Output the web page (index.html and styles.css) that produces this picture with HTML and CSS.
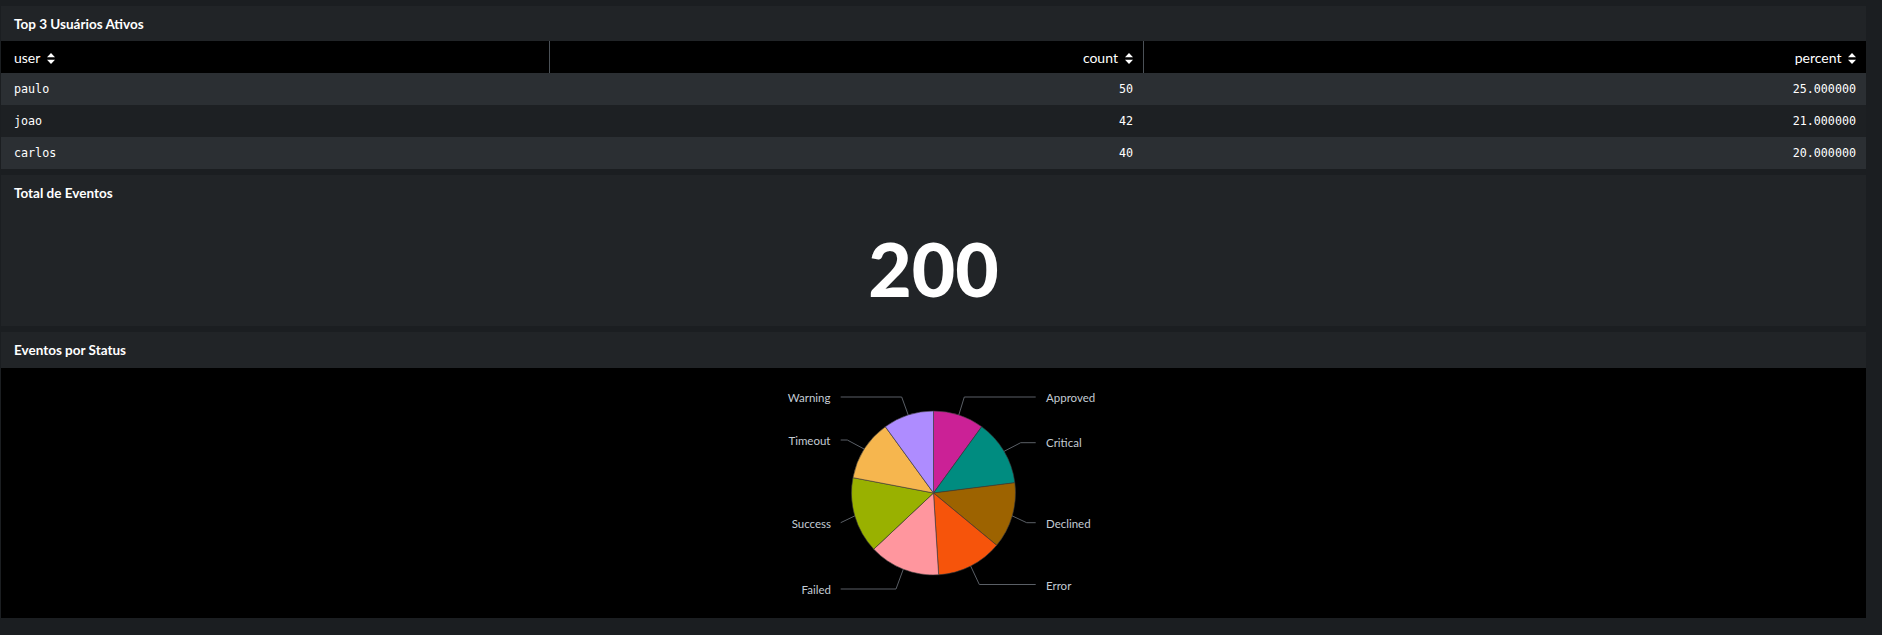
FILE: index.html
```html
<!DOCTYPE html>
<html lang="pt">
<head>
<meta charset="utf-8">
<title>Dashboard</title>
<link rel="stylesheet" href="styles.css">
</head>
<body>
<div class="dashboard">
  <section class="panel panel-table">
    <h2 class="panel-title">Top 3 Usuários Ativos</h2>
    <table class="data-table">
      <colgroup>
        <col class="col-user">
        <col class="col-count">
        <col class="col-percent">
      </colgroup>
      <thead>
        <tr>
          <th class="left">user <svg class="sort" width="8" height="11" viewBox="0 0 8 11"><path d="M4 0 L8 4.3 L0 4.3 Z M0 6.7 L8 6.7 L4 11 Z" fill="#fff"/></svg></th>
          <th class="right sep">count <svg class="sort" width="8" height="11" viewBox="0 0 8 11"><path d="M4 0 L8 4.3 L0 4.3 Z M0 6.7 L8 6.7 L4 11 Z" fill="#fff"/></svg></th>
          <th class="right sep">percent <svg class="sort" width="8" height="11" viewBox="0 0 8 11"><path d="M4 0 L8 4.3 L0 4.3 Z M0 6.7 L8 6.7 L4 11 Z" fill="#fff"/></svg></th>
        </tr>
      </thead>
      <tbody>
        <tr><td class="left">paulo</td><td class="right">50</td><td class="right">25.000000</td></tr>
        <tr><td class="left">joao</td><td class="right">42</td><td class="right">21.000000</td></tr>
        <tr><td class="left">carlos</td><td class="right">40</td><td class="right">20.000000</td></tr>
      </tbody>
    </table>
  </section>

  <section class="panel panel-single">
    <h2 class="panel-title">Total de Eventos</h2>
    <div class="single-value">200</div>
  </section>

  <section class="panel panel-chart">
    <h2 class="panel-title">Eventos por Status</h2>
    <div class="chart-area">
      <svg class="pie" width="401" height="250" viewBox="0 0 401 250">
        <g transform="translate(200.5,125)">
          <g class="slices" stroke="#3a3a3a" stroke-width="0.6">
            <path d="M0,0 L0,-82 A82,82 0 0 1 48.2,-66.34 Z" fill="#cb2196"/>
            <path d="M0,0 L48.2,-66.34 A82,82 0 0 1 81.35,-10.28 Z" fill="#008c80"/>
            <path d="M0,0 L81.35,-10.28 A82,82 0 0 1 63.18,52.27 Z" fill="#9d6300"/>
            <path d="M0,0 L63.18,52.27 A82,82 0 0 1 5.15,81.84 Z" fill="#f6540b"/>
            <path d="M0,0 L5.15,81.84 A82,82 0 0 1 -59.78,56.13 Z" fill="#ff969e"/>
            <path d="M0,0 L-59.78,56.13 A82,82 0 0 1 -80.55,-15.37 Z" fill="#99b100"/>
            <path d="M0,0 L-80.55,-15.37 A82,82 0 0 1 -48.2,-66.34 Z" fill="#f6b64e"/>
            <path d="M0,0 L-48.2,-66.34 A82,82 0 0 1 0,-82 Z" fill="#ae8cff"/>
          </g>
          <g class="leaders" fill="none" stroke="#5a5f66" stroke-width="1">
            <polyline points="25.3,-78 30.8,-96 102.2,-96"/>
            <polyline points="70.6,-41.7 87.2,-50.3 102.2,-50.3"/>
            <polyline points="78.7,22.9 93.2,29.7 102.2,29.7"/>
            <polyline points="37.2,73.1 45.8,91.5 102.2,91.5"/>
            <polyline points="-30.2,76.2 -37.5,96 -92.8,96"/>
            <polyline points="-78.7,22.9 -92.8,29.7"/>
            <polyline points="-69.2,-43.9 -86.2,-53 -92.8,-53"/>
            <polyline points="-25.3,-78 -31.8,-96 -92.8,-96"/>
          </g>
          <g class="labels">
            <text x="112.5" y="-96" class="lbl-r">Approved</text>
            <text x="112.5" y="-50.3" class="lbl-r">Critical</text>
            <text x="112.5" y="30.3" class="lbl-r">Declined</text>
            <text x="112.5" y="92" class="lbl-r">Error</text>
            <text x="-102.5" y="96" class="lbl-l">Failed</text>
            <text x="-102.5" y="30.3" class="lbl-l">Success</text>
            <text x="-103" y="-53" class="lbl-l">Timeout</text>
            <text x="-103" y="-96" class="lbl-l">Warning</text>
          </g>
        </g>
      </svg>
    </div>
  </section>
</div>
</body>
</html>
```
FILE: styles.css
```css
html, body {
  margin: 0;
  padding: 0;
  background: #1b1e21;
  height: 100%;
}

body {
  font-family: Lato, "Open Sans", "Liberation Sans", sans-serif;
  color: #ffffff;
  overflow: hidden;
}

.dashboard {
  width: 1865px;
  padding: 6px 0 0 1px;
  display: flex;
  flex-direction: column;
  gap: 6px;
}

.panel {
  background: #212427;
  display: flex;
  flex-direction: column;
}

.panel-title {
  margin: 0;
  height: 35px;
  padding: 0 13px;
  display: flex;
  align-items: center;
  font-size: 13.5px;
  font-weight: 700;
  color: #ffffff;
  letter-spacing: 0;
}

.panel-chart .panel-title {
  height: 36px;
}

.data-table {
  width: 100%;
  border-collapse: collapse;
  table-layout: fixed;
}

.col-user { width: 548px; }
.col-count { width: 594px; }
.col-percent { width: auto; }

.data-table th {
  background: #000000;
  height: 32px;
  padding: 0 10px 0 13px;
  font-weight: 400;
  font-size: 14px;
  color: #ffffff;
  white-space: nowrap;
}

.data-table th.sep {
  border-left: 1px solid #4b5157;
}

.data-table td {
  height: 32px;
  padding: 0 10px 0 13px;
  font-family: "DejaVu Sans Mono", "Liberation Mono", monospace;
  font-size: 11.7px;
  color: #ffffff;
}

.data-table tbody tr:nth-child(odd) td { background: #2b2f33; }
.data-table tbody tr:nth-child(even) td { background: #1d2023; }

.left { text-align: left; }
.right { text-align: right; }

.sort {
  display: inline-block;
  vertical-align: -1px;
  margin-left: 3px;
}

.panel-single {
  height: 151px;
}

.single-value {
  flex: 1;
  display: flex;
  align-items: center;
  justify-content: center;
  font-size: 75px;
  font-weight: 900;
  line-height: 1;
  padding-bottom: 0;
  color: #ffffff;
}

.chart-area {
  height: 250px;
  background: #000000;
  display: flex;
  justify-content: center;
}

.pie text {
  font-family: Lato, "Liberation Sans", sans-serif;
  font-size: 11.5px;
  fill: #c3cbd4;
  dominant-baseline: central;
}

.pie .lbl-l { text-anchor: end; }
.pie .lbl-r { text-anchor: start; }
```
